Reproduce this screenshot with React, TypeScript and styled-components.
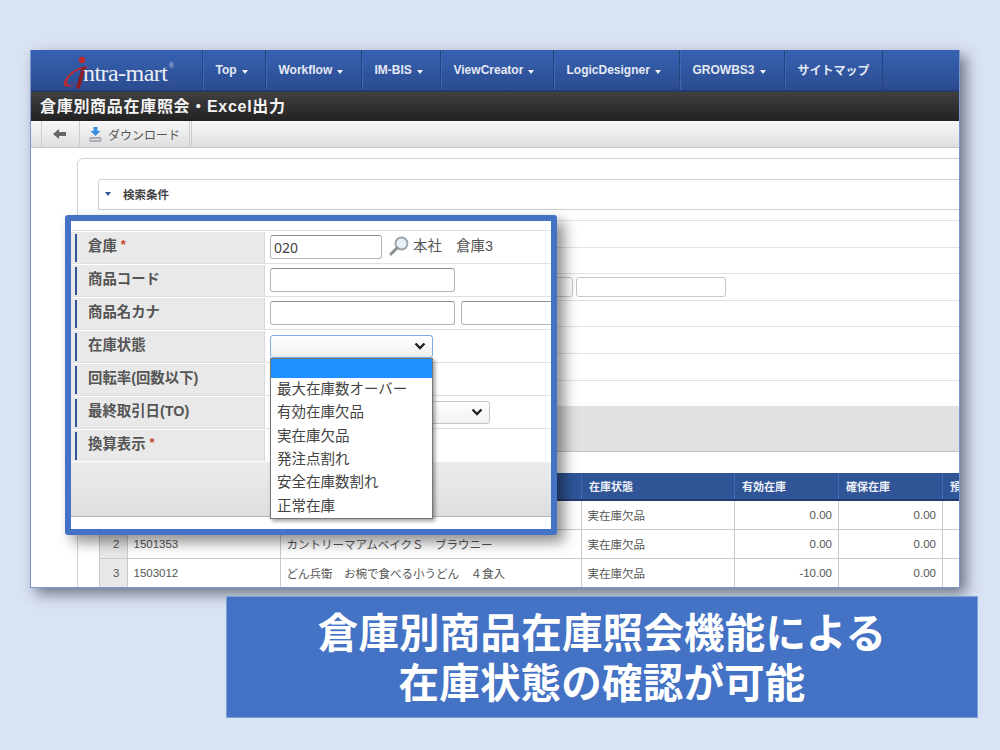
import React from "react";
import styled, { createGlobalStyle } from "styled-components";

const Global = createGlobalStyle`
  html, body { margin: 0; padding: 0; background: #dae3f3; }
  body { font-family: "Liberation Sans", "Noto Sans CJK JP", sans-serif; overflow: hidden; }
  * { box-sizing: border-box; }
`;

const Slide = styled.div`
  width: 1000px; height: 750px; padding-top: 50px; background: #dae3f3;
  display: flex; flex-direction: column;
`;
const Win = styled.div`
  position: relative; width: 930px; height: 538px;
  border: 1px solid #7d97cc; border-top: 0; background: #fff; overflow: hidden;
  display: flex; flex-direction: column;
`;
const WinShadow = styled.div`
  margin-left: 30px; width: 930px; height: 538px;
  box-shadow: 6px 6px 13px rgba(40, 45, 60, 0.6);
`;
const Nav = styled.nav`
  height: 42px; flex: none; display: flex;
  background: linear-gradient(#3662b2, #2c4c90);
  border-bottom: 2px solid #223c72;
`;
const Logo = styled.div`
  width: 172px; flex: none; display: flex; align-items: center; padding: 3px 0 0 31px;
  border-right: 1px solid #24447f;
`;
const LogoText = styled.span`
  font-family: "Liberation Serif", serif; font-size: 24px; color: #eceef3; margin-left: -15px;
  letter-spacing: -0.55px; margin-top: 3px; display: flex;
`;
const Reg = styled.span`
  font-size: 8px; color: #c9d2e2; margin: 1px 0 0 1px;
`;
const NavItem = styled.div<{ $w: number }>`
  width: ${(p) => p.$w}px; flex: none; padding: 0 0 1px 11.5px; display: flex; align-items: center;
  font-size: 12px; font-weight: 700; color: #e4e9f4;
  border-right: 1px solid #24447f; border-left: 1px solid #3c68b8;
`;
const Caret = styled.i`
  width: 0; height: 0; margin: 4px 0 0 5px;
  border-left: 3.5px solid transparent; border-right: 3.5px solid transparent;
  border-top: 4px solid #eef1f8;
`;
const TitleBar = styled.div`
  height: 29px; flex: none; display: flex; align-items: center; padding: 0 0 3px 9px;
  background: linear-gradient(#404040, #222);
  color: #f4f4f4; font-size: 16px; font-weight: 700; letter-spacing: 0.7px;
`;
const Toolbar = styled.div`
  height: 27px; flex: none; display: flex; padding-left: 10px;
  background: linear-gradient(#f8f8f8, #dedede); border-bottom: 1px solid #c8c8c8;
`;
const ToolBtn = styled.div<{ $w: number }>`
  width: ${(p) => p.$w}px; display: flex; align-items: center; justify-content: center; gap: 5px;
  border-left: 1px solid #cdcdcd; font-size: 12px; color: #555; padding-right: 1px;
  &:last-child { border-right: 3px double #cdcdcd; }
`;
const Content = styled.div`
  flex: 1; padding: 10px 0 0 46px; background: #fff; min-height: 0;
`;
const Card = styled.div`
  width: 900px; height: 440px; padding: 20px 0 0 20px;
  border: 1px solid #d2d2d2; border-radius: 6px 0 0 0;
`;
const PanelHead = styled.div`
  height: 31px; display: flex; align-items: center; gap: 12px; padding: 0 0 2px 6px;
  border: 1px solid #cfcfcf; border-radius: 3px 0 0 0; font-size: 11.5px; color: #444; font-weight: 700;
`;
const HeadCaret = styled.i`
  width: 0; height: 0; margin-top: 1px;
  border-left: 3.5px solid transparent; border-right: 3.5px solid transparent;
  border-top: 4px solid #2f5597;
`;
const BackRows = styled.div`
  margin-top: 10px; border-top: 1px solid #e2e2e2;
`;
const BackRow = styled.div`
  height: 26.6px; border-bottom: 1px solid #e2e2e2; display: flex; align-items: center; gap: 3px;
  padding-left: 340px;
`;
const BackInput = styled.div<{ $w: number }>`
  width: ${(p) => p.$w}px; height: 20px; border: 1px solid #c8c8c8; border-radius: 3px; background: #fff;
`;
const BackBar = styled.div`
  height: 45px; background: #e1e1e1; border-bottom: 1px solid #c2c2c2;
`;
const Table = styled.table`
  margin-top: 21px; margin-left: 1px; border-collapse: collapse; table-layout: fixed; width: 860px;
  font-size: 11px; color: #555;
`;
const Th = styled.th`
  height: 27px; background: #2f5597; color: #eef1f7; font-weight: 700; text-align: left; padding: 0 0 0 7px;
  font-size: 11px; border-right: 1px solid #3f68b4; border-bottom: 2px solid #223c72; overflow: hidden; white-space: nowrap;
`;
const Td = styled.td<{ $num?: boolean; $idx?: boolean }>`
  height: 29px; padding: 0 ${(p) => (p.$num ? "6px" : "0")} 0 ${(p) => (p.$num ? "0" : "5.5px")};
  text-align: ${(p) => (p.$num ? "right" : p.$idx ? "center" : "left")};
  background: ${(p) => (p.$idx ? "#e8e8e8" : "#fff")};
  border: 1px solid #c9c9c9; font-size: 11.5px; white-space: nowrap; overflow: hidden;
`;
const Popup = styled.div`
  position: absolute; left: 34px; top: 165px; width: 492px; height: 320px;
  border: 6px solid #4472c4; border-radius: 3px; background: #fff; padding-top: 9px;
  box-shadow: 7px 7px 14px rgba(0, 0, 0, 0.45);
`;
const FormRow = styled.div`
  height: 33px; display: grid; grid-template-columns: 194px 1fr; border-top: 1px solid #e0e0e0;
`;
const Label = styled.div`
  margin-top: 1px; background: #e9e9e9; border-right: 1px solid #d8d8d8; position: relative;
  display: flex; align-items: center; padding: 0 0 6px 17px; font-size: 14.4px; font-weight: 700; color: #555;
  &::before { content: ""; position: absolute; left: 4px; top: 2px; bottom: 1px; width: 2px; background: #2f5597; }
`;
const Req = styled.span`
  color: #c8432b; font-size: 13px; margin-left: 4px;
`;
const Field = styled.div`
  display: flex; align-items: center; padding-left: 5px; gap: 6px; font-size: 14px; color: #555; overflow: hidden;
`;
const Input = styled.input<{ $w: number }>`
  width: ${(p) => p.$w}px; height: 24px; flex: none; border: 1px solid #b5b5b5; border-top-color: #8f8f8f;
  border-radius: 3px; padding: 0 3px; font: 14px "Noto Sans", sans-serif; color: #444; background: #fff;
`;
const chevron = `url("data:image/svg+xml,%3Csvg xmlns='http://www.w3.org/2000/svg' width='12' height='8' viewBox='0 0 12 8'%3E%3Cpath d='M1.5 1.5L6 6l4.5-4.5' fill='none' stroke='%23222' stroke-width='2.4'/%3E%3C/svg%3E")`;
const Select = styled.select<{ $w: number; $focus?: boolean }>`
  width: ${(p) => p.$w}px; height: 23px; flex: none; border-radius: 3px; appearance: none;
  border: 1px solid ${(p) => (p.$focus ? "#7fa9e8" : "#c4c4c4")};
  background: ${chevron} no-repeat right 6px center, linear-gradient(#fff, #f1f1f1); color: #333;
`;
const SearchWrap = styled.span`
  display: flex; margin: 0 0 3px 1px;
`;
const StoreText = styled.span`
  margin: 0 0 5px -2px; white-space: pre; font-size: 14.4px; color: #555;
`;
const FormFoot = styled.div`
  height: 55px; margin-top: 1px; background: linear-gradient(#ececec, #dedede); border-bottom: 1px solid #b4b4b4;
`;
const Dropdown = styled.div`
  position: absolute; left: 199px; top: 137px; width: 163px; height: 161px; background: #fff;
  border: 1px solid #777; box-shadow: 2px 2px 4px rgba(0, 0, 0, 0.4);
`;
const OptionBlank = styled.div`
  height: 19px; background: #1e90ff;
`;
const Option = styled.div`
  height: 23.3px; padding: 0 0 4px 6px; display: flex; align-items: center; font-size: 14.5px; color: #444; white-space: nowrap;
`;
const Banner = styled.div`
  margin: 8px 0 0 226px; width: 752px; height: 122px; padding-bottom: 2px; background: #4472c4; color: #fff;
  display: flex; flex-direction: column; align-items: center; justify-content: center;
  font-family: "Noto Sans CJK JP", sans-serif; font-weight: 700; font-size: 40.5px; line-height: 50px;
  letter-spacing: 0.2px; border: 1px solid #7f9fd8;
`;

const LogoMark = () => (
  <svg width="36" height="36" viewBox="0 0 36 36">
    <circle cx="20" cy="6" r="3.2" fill="#c0272d" />
    <path d="M28 13C18 10 4 20 2 29c-1 5 6 5 13 0-6 3-10 3-10-1 1-7 12-14 23-15z" fill="#bf2a2f" />
    <path d="M20 13l4 0-6 21c-1 1-3 1-4 0z" fill="#8a1c22" />
  </svg>
);
const BackArrow = () => (
  <svg width="14" height="12" viewBox="0 0 14 12">
    <path d="M0 6L6 1v3h7v4H6v3z" fill="#666" />
  </svg>
);
const DownloadIcon = () => (
  <svg width="15" height="17" viewBox="0 0 15 17">
    <rect x="1.5" y="11" width="12" height="5" rx="1.5" fill="#a9adb3" />
    <rect x="3" y="13" width="9" height="1" fill="#e8e8e8" />
    <path d="M5.5 1h4v4h3l-5 5-5-5h3z" fill="#3b8fe0" />
  </svg>
);
const SearchIcon = () => (
  <svg width="20" height="20" viewBox="0 0 20 20">
    <circle cx="12.5" cy="7.5" r="6" fill="#e8f0f6" stroke="#9aa3a8" strokeWidth="1.8" />
    <path d="M8 12L2 18" stroke="#8a8f90" strokeWidth="3" strokeLinecap="round" />
  </svg>
);

const menus: [string, number, boolean][] = [
  ["Top", 63, true], ["Workflow", 96, true], ["IM-BIS", 79, true], ["ViewCreator", 113, true],
  ["LogicDesigner", 126, true], ["GROWBS3", 105, true], ["サイトマップ", 98, false],
];
const rows: [string, string, string, string, string, string][] = [
  ["", "", "", "実在庫欠品", "0.00", "0.00"],
  ["2", "1501353", "カントリーマアムベイクＳ　ブラウニー", "実在庫欠品", "0.00", "0.00"],
  ["3", "1503012", "どん兵衛　お椀で食べる小うどん　４食入", "実在庫欠品", "-10.00", "0.00"],
];
const options = ["最大在庫数オーバー", "有効在庫欠品", "実在庫欠品", "発注点割れ", "安全在庫数割れ", "正常在庫"];

export default function App() {
  return (
    <Slide>
      <Global />
      <WinShadow>
        <Win>
          <Nav>
            <Logo>
              <LogoMark />
              <LogoText>ntra-mart<Reg>®</Reg></LogoText>
            </Logo>
            {menus.map(([t, w, c]) => (
              <NavItem key={t} $w={w}>{t}{c && <Caret />}</NavItem>
            ))}
          </Nav>
          <TitleBar>倉庫別商品在庫照会・Excel出力</TitleBar>
          <Toolbar>
            <ToolBtn $w={38}><BackArrow /></ToolBtn>
            <ToolBtn $w={113}><DownloadIcon />ダウンロード</ToolBtn>
          </Toolbar>
          <Content>
            <Card>
              <PanelHead><HeadCaret />検索条件</PanelHead>
              <BackRows>
                <BackRow />
                <BackRow />
                <BackRow><BackInput $w={135} /><BackInput $w={150} /></BackRow>
                <BackRow />
                <BackRow />
                <BackRow />
                <BackRow />
              </BackRows>
              <BackBar />
              <Table>
                <colgroup>
                  <col width="28" /><col width="153" /><col width="301" /><col width="153" /><col width="104" /><col width="104" /><col width="60" />
                </colgroup>
                <thead>
                  <tr>
                    <Th /><Th /><Th /><Th>在庫状態</Th><Th>有効在庫</Th><Th>確保在庫</Th><Th>預</Th>
                  </tr>
                </thead>
                <tbody>
                  {rows.map((r, i) => (
                    <tr key={i}>
                      <Td $idx>{r[0]}</Td><Td>{r[1]}</Td><Td>{r[2]}</Td><Td>{r[3]}</Td>
                      <Td $num>{r[4]}</Td><Td $num>{r[5]}</Td><Td $num />
                    </tr>
                  ))}
                </tbody>
              </Table>
            </Card>
          </Content>
          <Popup>
            <FormRow>
              <Label>倉庫<Req>*</Req></Label>
              <Field>
                <Input $w={112} defaultValue="020" />
                <SearchWrap><SearchIcon /></SearchWrap>
                <StoreText>本社　倉庫3</StoreText>
              </Field>
            </FormRow>
            <FormRow>
              <Label>商品コード</Label>
              <Field><Input $w={185} /></Field>
            </FormRow>
            <FormRow>
              <Label>商品名カナ</Label>
              <Field><Input $w={185} /><Input $w={185} /></Field>
            </FormRow>
            <FormRow>
              <Label>在庫状態</Label>
              <Field><Select $w={163} $focus><option></option></Select></Field>
            </FormRow>
            <FormRow>
              <Label>回転率(回数以下)</Label>
              <Field />
            </FormRow>
            <FormRow>
              <Label>最終取引日(TO)</Label>
              <Field><Select $w={220}><option></option></Select></Field>
            </FormRow>
            <FormRow>
              <Label>換算表示<Req>*</Req></Label>
              <Field />
            </FormRow>
            <FormFoot />
            <Dropdown>
              <OptionBlank />
              {options.map((o) => <Option key={o}>{o}</Option>)}
            </Dropdown>
          </Popup>
        </Win>
      </WinShadow>
      <Banner>
        <div>倉庫別商品在庫照会機能による</div>
        <div>在庫状態の確認が可能</div>
      </Banner>
    </Slide>
  );
}
